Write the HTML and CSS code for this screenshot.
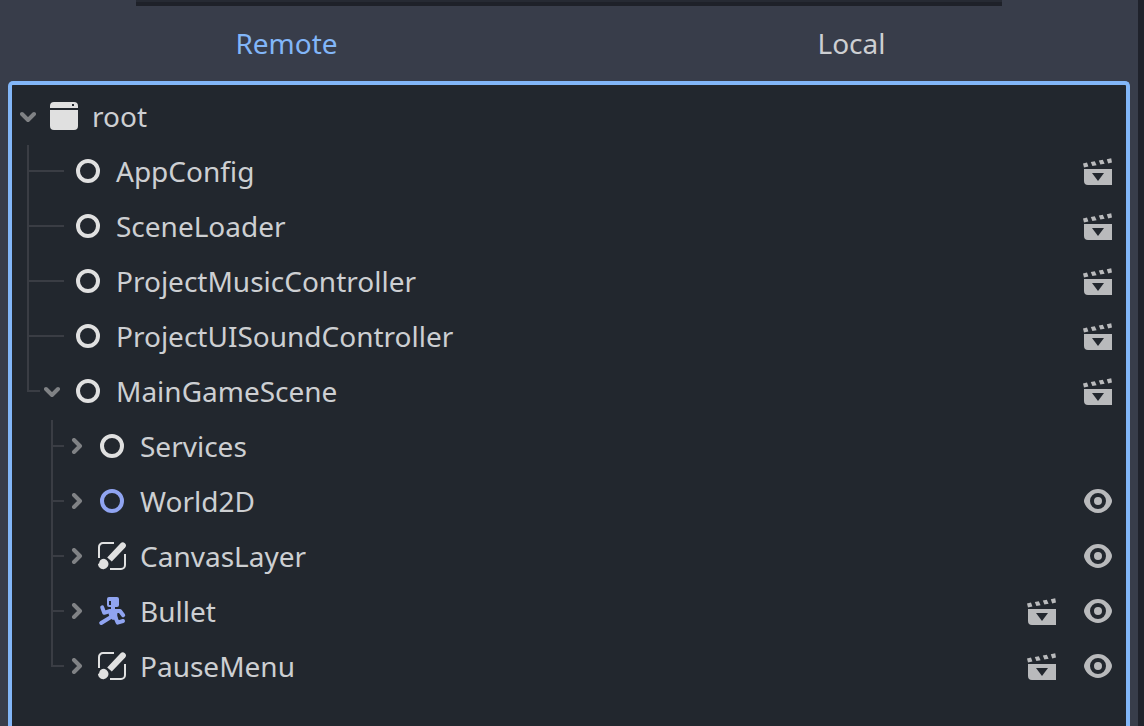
FILE: index.html
```
<!DOCTYPE html>
<html lang="en">
<head>
<meta charset="utf-8">
<title>Scene</title>
<link rel="stylesheet" href="styles.css">
</head>
<body>
<svg class="sprites" aria-hidden="true">
  <symbol id="chevron-down" viewBox="0 0 16 16"><path d="M2 6l6 6 6-6" fill="none" stroke="currentColor" stroke-width="4" stroke-linecap="round" stroke-linejoin="round"/></symbol>
  <symbol id="chevron-right" viewBox="0 0 16 16"><path d="M6 2l6 6-6 6" fill="none" stroke="currentColor" stroke-width="4" stroke-linecap="round" stroke-linejoin="round"/></symbol>
  <symbol id="window" viewBox="0 0 16 16"><path fill="currentColor" fill-rule="evenodd" d="M3 1h10a2 2 0 0 1 2 2v1H1V3a2 2 0 0 1 2-2zm9 1v1h1V2zM1 5h14v8a2 2 0 0 1-2 2H3a2 2 0 0 1-2-2z"/></symbol>
  <symbol id="node" viewBox="0 0 16 16"><circle cx="8" cy="8" r="5" fill="none" stroke="currentColor" stroke-width="2"/></symbol>
  <symbol id="canvas" viewBox="0 0 16 16">
    <path d="M1.500 9V3.500a2 2 0 0 1 2-2H9M7 14.500h5.500a2 2 0 0 0 2-2V7" fill="none" stroke="currentColor"/>
    <path fill="currentColor" d="M12.300 1.600a1.600 1.600 0 0 1 2.300 2.200L7.900 10.700 5.600 8.700zM4 9.400a2.600 2.600 0 1 1-2.400 4.200c-.4-.5-.6-1-.6-1.700.3.100.6 0 .6-.5C1.800 10.200 2.800 9.400 4 9.400z"/>
  </symbol>
  <symbol id="body" viewBox="0 0 16 16">
    <path fill="currentColor" fill-rule="evenodd" d="M6.500 1h4a1 1 0 0 1 1 1v3a1 1 0 0 1-1 1h-1v1h1.500l-.4 3 .2 1.500-2.300 1L7 11.500 6.300 9.500 6.500 7.500 7.500 7V6h-1a1 1 0 0 1-1-1V2a1 1 0 0 1 1-1zm0 2v2h1V3z"/>
    <path d="M3.100 6.200l1 2.700L7 8M10 8h2l1.600 2.100M8 10.700l-5.400 3.300M9.500 10.700l1.300 3.100 2.700-.8" fill="none" stroke="currentColor" stroke-width="2" stroke-linecap="round" stroke-linejoin="round"/>
  </symbol>
  <symbol id="scene" viewBox="0 0 16 16"><path fill="currentColor" fill-rule="evenodd" d="M1 7h14v8H3a2 2 0 0 1-2-2zM5 9l3 4 3-4zM.5 4.200l2-.4.700 2-2.200.5zM4.400 3.500l2-.4.900 2-2.100.4zM8.400 2.800l2-.4.900 2-2.100.4zM12.400 2.100l2.200-.5.400 2.200-1.900.4z"/></symbol>
  <symbol id="eye" viewBox="0 0 16 16"><path fill="currentColor" fill-rule="evenodd" d="M8 2C4.700 2 2 4.500 1.100 7.200q-.2.800 0 1.600C2 11.500 4.700 14 8 14s6-2.500 6.900-5.200q.2-.8 0-1.600C14 4.500 11.300 2 8 2zm0 2a4 4 0 1 1 0 8 4 4 0 0 1 0-8zm0 2a2 2 0 1 0 0 4 2 2 0 0 0 0-4z"/></symbol>
</svg>
<div class="editor">
  <main class="dock">
    <div class="filter-edge"></div>
    <nav class="tabs">
      <button class="tab tab-active" type="button">Remote</button>
      <button class="tab" type="button">Local</button>
    </nav>
    <section class="tree">
      <ul class="list">
        <li>
          <div class="row">
            <button class="toggle" type="button" aria-label="Collapse root"><svg class="chevron"><use href="#chevron-down"/></svg></button>
            <svg class="icon"><use href="#window"/></svg><span class="name">root</span>
          </div>
          <ul class="list children">
            <li class="leaf"><div class="row"><span class="toggle"></span><svg class="icon"><use href="#node"/></svg><span class="name">AppConfig</span><button class="action" type="button" aria-label="Open scene"><svg class="icon"><use href="#scene"/></svg></button></div></li>
            <li class="leaf"><div class="row"><span class="toggle"></span><svg class="icon"><use href="#node"/></svg><span class="name">SceneLoader</span><button class="action" type="button" aria-label="Open scene"><svg class="icon"><use href="#scene"/></svg></button></div></li>
            <li class="leaf"><div class="row"><span class="toggle"></span><svg class="icon"><use href="#node"/></svg><span class="name">ProjectMusicController</span><button class="action" type="button" aria-label="Open scene"><svg class="icon"><use href="#scene"/></svg></button></div></li>
            <li class="leaf"><div class="row"><span class="toggle"></span><svg class="icon"><use href="#node"/></svg><span class="name">ProjectUISoundController</span><button class="action" type="button" aria-label="Open scene"><svg class="icon"><use href="#scene"/></svg></button></div></li>
            <li>
              <div class="row"><button class="toggle" type="button" aria-label="Collapse MainGameScene"><svg class="chevron"><use href="#chevron-down"/></svg></button><svg class="icon"><use href="#node"/></svg><span class="name">MainGameScene</span><button class="action" type="button" aria-label="Open scene"><svg class="icon"><use href="#scene"/></svg></button></div>
              <ul class="list children">
                <li><div class="row"><button class="toggle" type="button" aria-label="Expand Services"><svg class="chevron"><use href="#chevron-right"/></svg></button><svg class="icon"><use href="#node"/></svg><span class="name">Services</span></div></li>
                <li><div class="row"><button class="toggle" type="button" aria-label="Expand World2D"><svg class="chevron"><use href="#chevron-right"/></svg></button><svg class="icon icon-2d"><use href="#node"/></svg><span class="name">World2D</span><button class="action" type="button" aria-label="Toggle visibility"><svg class="icon"><use href="#eye"/></svg></button></div></li>
                <li><div class="row"><button class="toggle" type="button" aria-label="Expand CanvasLayer"><svg class="chevron"><use href="#chevron-right"/></svg></button><svg class="icon"><use href="#canvas"/></svg><span class="name">CanvasLayer</span><button class="action" type="button" aria-label="Toggle visibility"><svg class="icon"><use href="#eye"/></svg></button></div></li>
                <li><div class="row"><button class="toggle" type="button" aria-label="Expand Bullet"><svg class="chevron"><use href="#chevron-right"/></svg></button><svg class="icon icon-2d"><use href="#body"/></svg><span class="name">Bullet</span><button class="action" type="button" aria-label="Open scene"><svg class="icon"><use href="#scene"/></svg></button><button class="action" type="button" aria-label="Toggle visibility"><svg class="icon"><use href="#eye"/></svg></button></div></li>
                <li><div class="row"><button class="toggle" type="button" aria-label="Expand PauseMenu"><svg class="chevron"><use href="#chevron-right"/></svg></button><svg class="icon"><use href="#canvas"/></svg><span class="name">PauseMenu</span><button class="action" type="button" aria-label="Open scene"><svg class="icon"><use href="#scene"/></svg></button><button class="action" type="button" aria-label="Toggle visibility"><svg class="icon"><use href="#eye"/></svg></button></div></li>
              </ul>
            </li>
          </ul>
        </li>
      </ul>
    </section>
  </main>
</div>
</body>
</html>
```
FILE: styles.css
```
* {
  box-sizing: border-box;
}

body {
  margin: 0;
  background: #1f222b;
  color: #cdcfd2;
  font: 28px/40px "Noto Sans", sans-serif;
}

button {
  margin: 0;
  padding: 0;
  border: 0;
  background: none;
  color: inherit;
  font: inherit;
}

.sprites {
  display: none;
}

.editor {
  height: 100vh;
  padding-right: 6px;
}

.dock {
  display: flex;
  flex-direction: column;
  height: 100%;
  padding: 0 8px;
  background: #383d4a;
}

.filter-edge {
  height: 6px;
  margin: 0 128px;
  border-bottom: 4px solid #1e2129;
  background: #262a33;
}

.tabs {
  display: grid;
  grid-template-columns: 1fr 1fr;
  gap: 8px;
  padding: 17px 0 18px;
}

.tab-active {
  color: #82b6f8;
}

.tree {
  flex: 1;
  overflow: hidden;
  padding-top: 4px;
  border: 4px solid #82b6f8;
  border-bottom: 0;
  border-radius: 5px 5px 0 0;
  background: #22272e;
}

.list {
  margin: 0;
  padding: 0;
  list-style: none;
}

.children {
  padding-left: 24px;
}

.children > li {
  position: relative;
}

/* Guide lines: a trunk down the siblings and a branch to each row. */
.children > li::before,
.children > li::after {
  content: "";
  position: absolute;
  left: -9px;
  background: #3a3d44;
}

.children > li::before {
  top: 0;
  width: 2px;
  height: 100%;
}

.children > li:first-child::before {
  top: 1px;
}

.children > li:last-child::before {
  height: 28px;
}

.children > li::after {
  top: 26px;
  width: 13px;
  height: 2px;
}

.children > .leaf::after {
  width: 37px;
}

.row {
  display: flex;
  align-items: center;
  height: 55px;
  padding: 0 12px 1px 8px;
}

.toggle {
  width: 16px;
  height: 16px;
  margin-right: 12px;
  color: #808285;
}

.chevron {
  display: block;
  width: 16px;
  height: 16px;
}

.icon {
  display: block;
  width: 32px;
  height: 32px;
  color: #e0e0e0;
}

.icon-2d {
  color: #90a4f1;
}

.name {
  flex: 1;
  margin-left: 12px;
}

.action {
  margin-left: 24px;
}

.action .icon {
  color: #b9babc;
}
```
